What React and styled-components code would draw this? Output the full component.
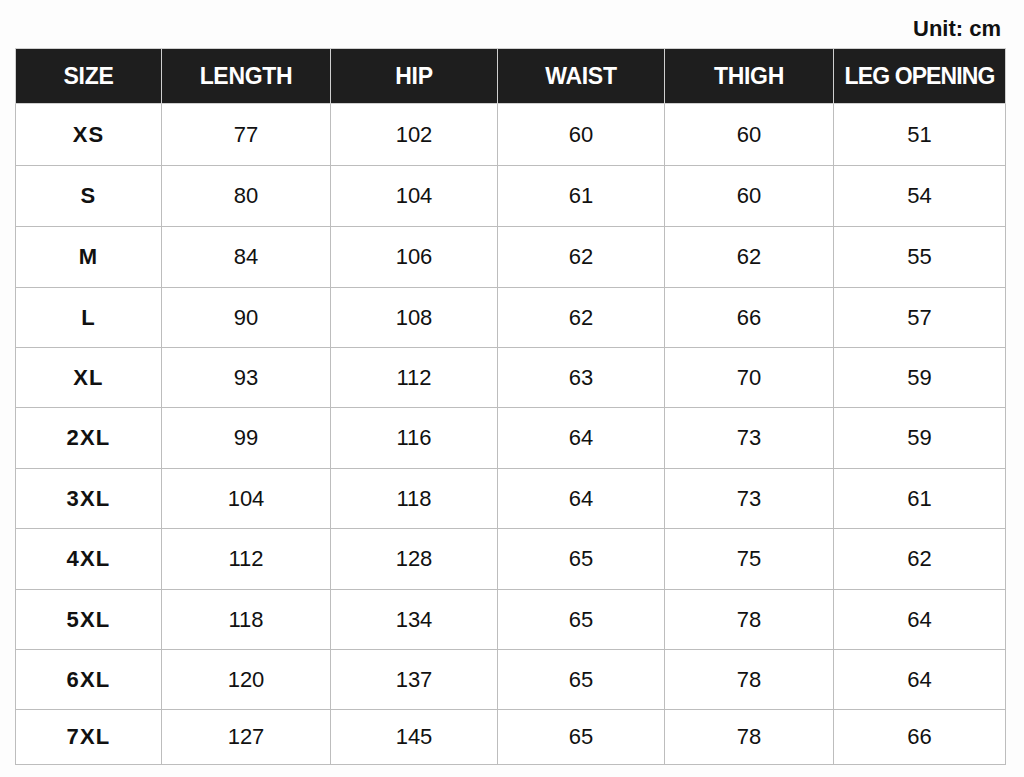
import React from 'react';
import styled, { createGlobalStyle } from 'styled-components';

const GlobalStyle = createGlobalStyle`
  html, body {
    margin: 0;
    padding: 0;
    background: #fdfdfd;
  }
  body {
    font-family: "Liberation Sans", Arial, sans-serif;
    color: #111;
  }
`;

const Page = styled.div`
  width: 1024px;
  height: 777px;
  padding: 0 19px 0 15px;
  box-sizing: border-box;
`;

const UnitBar = styled.div`
  height: 48px;
  display: flex;
  justify-content: flex-end;
  align-items: center;
  padding-top: 9px;
  box-sizing: border-box;
  padding-right: 4px;
  font-size: 22px;
  font-weight: 700;
  color: #111;
`;

const Table = styled.table`
  width: 991px;
  table-layout: fixed;
  border-collapse: collapse;
  background: #fff;
`;

const HeadCell = styled.th`
  height: 54px;
  padding: 0;
  background: #1e1e1e;
  color: #fff;
  font-size: 23px;
  font-weight: 700;
  letter-spacing: ${(p) => (p.tight ? '-0.9px' : '-0.3px')};
  text-align: center;
  border: 1px solid #cfcfcf;
  white-space: nowrap;
`;

const Cell = styled.td`
  height: ${(p) => p.h}px;
  padding: 0;
  text-align: center;
  font-size: 22px;
  font-weight: ${(p) => (p.bold ? 700 : 400)};
  letter-spacing: ${(p) => (p.bold ? '1.2px' : '0')};
  color: #111;
  border: 1px solid #bdbdbd;
`;

const columns = ['SIZE', 'LENGTH', 'HIP', 'WAIST', 'THIGH', 'LEG OPENING'];
const widths = [146, 169, 167, 167, 169, 172];

const rows = [
  ['XS', 77, 102, 60, 60, 51],
  ['S', 80, 104, 61, 60, 54],
  ['M', 84, 106, 62, 62, 55],
  ['L', 90, 108, 62, 66, 57],
  ['XL', 93, 112, 63, 70, 59],
  ['2XL', 99, 116, 64, 73, 59],
  ['3XL', 104, 118, 64, 73, 61],
  ['4XL', 112, 128, 65, 75, 62],
  ['5XL', 118, 134, 65, 78, 64],
  ['6XL', 120, 137, 65, 78, 64],
  ['7XL', 127, 145, 65, 78, 66],
];

// row pitch in the chart, minus the shared border
const heights = [61, 60, 60, 59, 59, 60, 59, 60, 59, 59, 54];

export default function App() {
  return (
    <Page>
      <GlobalStyle />
      <UnitBar>Unit: cm</UnitBar>
      <Table>
        <colgroup>
          {widths.map((w, i) => (
            <col key={i} style={{ width: w }} />
          ))}
        </colgroup>
        <thead>
          <tr>
            {columns.map((c) => (
              <HeadCell key={c} tight={c === 'LEG OPENING'}>
                {c}
              </HeadCell>
            ))}
          </tr>
        </thead>
        <tbody>
          {rows.map((r, i) => (
            <tr key={r[0]}>
              {r.map((v, j) => (
                <Cell key={j} bold={j === 0} h={heights[i]}>
                  {v}
                </Cell>
              ))}
            </tr>
          ))}
        </tbody>
      </Table>
    </Page>
  );
}
